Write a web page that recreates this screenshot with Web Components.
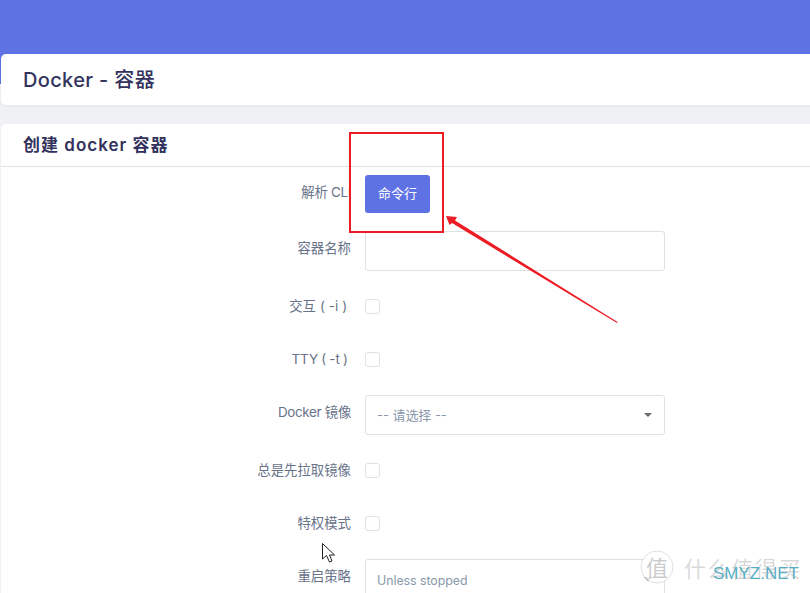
<!DOCTYPE html>
<html lang="zh">
<head>
<meta charset="utf-8">
<title>Docker - 容器</title>
<style>
    html, body {
        margin: 0;
        height: 100%;
        overflow: hidden;
        background: #f0f1f4;
        font-family: Inter, "Noto Sans CJK SC", sans-serif;
    }
</style>
</head>
<body>
<docker-page>
    <page-title slot="header">Docker - 容器</page-title>
    <form-card title="创建 docker 容器">
        <form-row label="解析 CLI" style="--label-track:-0.3px"><ui-button>命令行</ui-button></form-row>
        <form-row label="容器名称"><ui-input></ui-input></form-row>
        <form-row label="交互 ( -i )&nbsp;" check style="--label-word:0.2px"><ui-check></ui-check></form-row>
        <form-row label="TTY ( -t )&nbsp;" check style="--label-word:-0.6px"><ui-check></ui-check></form-row>
        <form-row label="Docker 镜像" style="--label-track:-0.3px"><ui-select>-- 请选择 --</ui-select></form-row>
        <form-row label="总是先拉取镜像" check><ui-check></ui-check></form-row>
        <form-row label="特权模式" check><ui-check></ui-check></form-row>
        <form-row label="重启策略"><ui-select latin><span style="font-size:12.4px">Unless stopped</span></ui-select></form-row>
    </form-card>
</docker-page>
<shot-marks></shot-marks>
<script>
"use strict";
class DockerPage extends HTMLElement {
    constructor() {
        super();
        this.attachShadow({ mode: "open" });
        this.shadowRoot.innerHTML = `
            <style>
                :host {
                    display: block;
                    height: 593px;
                    overflow: hidden;
                    background: linear-gradient(#5e72e4 84px, #f0f1f4 84px);
                }
                #wrap {
                    display: flex;
                    flex-direction: column;
                    gap: 19px;
                    padding: 54px 0 0 1px;
                    width: 830px;
                }
            </style>
            <div id="wrap">
                <slot name="header"></slot>
                <slot></slot>
            </div>
        `;
    }
}
customElements.define("docker-page", DockerPage);

class PageTitle extends HTMLElement {
    constructor() {
        super();
        this.attachShadow({ mode: "open" });
        this.shadowRoot.innerHTML = `
            <style>
                :host {
                    display: flex;
                    align-items: center;
                    box-sizing: border-box;
                    height: 51px;
                    padding: 0 0 3px 22px;
                    background: #fff;
                    border-radius: 5px;
                    box-shadow: 0 1px 3px rgba(50,50,93,0.06);
                    color: #32325d;
                    font-size: 20px;
                    font-weight: 500;
                    letter-spacing: 0.35px;
                }
            </style>
            <slot></slot>
        `;
    }
}
customElements.define("page-title", PageTitle);

class FormCard extends HTMLElement {
    constructor() {
        super();
        this.attachShadow({ mode: "open" });
        this.shadowRoot.innerHTML = `
            <style>
                :host {
                    display: block;
                    background: #fff;
                    border-radius: 5px 5px 0 0;
                }
                header {
                    display: flex;
                    align-items: center;
                    box-sizing: border-box;
                    height: 43px;
                    padding: 0 0 3px 22px;
                    border-bottom: 1px solid #e0e1e4;
                    color: #32325d;
                    font-size: 17px;
                    font-weight: 600;
                    letter-spacing: 1px;
                }
                #main {
                    display: flex;
                    flex-direction: column;
                    gap: 18px;
                    padding-top: 8px;
                }
            </style>
            <header></header>
            <div id="main"><slot></slot></div>
        `;
        this.shadowRoot.querySelector("header").textContent = this.getAttribute("title");
        this.removeAttribute("title");
    }
}
customElements.define("form-card", FormCard);

class FormRow extends HTMLElement {
    constructor() {
        super();
        this.attachShadow({ mode: "open" });
        this.shadowRoot.innerHTML = `
            <style>
                :host {
                    display: grid;
                    grid-template-columns: 350px 300px;
                    column-gap: 14px;
                }
                :host([check]) {
                    height: 35px;
                }
                label {
                    text-align: right;
                    padding-top: 7px;
                    color: #687289;
                    font-size: 13.4px;
                    line-height: 20px;
                    letter-spacing: var(--label-track, 0);
                    word-spacing: var(--label-word, 0);
                }
            </style>
            <label></label>
            <div><slot></slot></div>
        `;
        this.shadowRoot.querySelector("label").textContent = this.getAttribute("label");
    }
}
customElements.define("form-row", FormRow);

class UiButton extends HTMLElement {
    constructor() {
        super();
        this.attachShadow({ mode: "open" });
        this.shadowRoot.innerHTML = `
            <style>
                :host {
                    display: flex;
                    align-items: center;
                    justify-content: center;
                    box-sizing: border-box;
                    width: 65px;
                    height: 38px;
                    padding-bottom: 3px;
                    background: #5e72e4;
                    border-radius: 3px;
                    color: #fff;
                    font-size: 13px;
                }
            </style>
            <slot></slot>
        `;
    }
}
customElements.define("ui-button", UiButton);

class UiInput extends HTMLElement {
    constructor() {
        super();
        this.attachShadow({ mode: "open" });
        this.shadowRoot.innerHTML = `
            <style>
                :host {
                    display: block;
                    box-sizing: border-box;
                    height: 40px;
                    border: 1px solid #dee2e6;
                    border-radius: 3px;
                    background: #fff;
                }
            </style>
        `;
    }
}
customElements.define("ui-input", UiInput);

class UiCheck extends HTMLElement {
    constructor() {
        super();
        this.attachShadow({ mode: "open" });
        this.shadowRoot.innerHTML = `
            <style>
                :host {
                    display: block;
                    box-sizing: border-box;
                    width: 15px;
                    height: 15px;
                    margin-top: 10px;
                    border: 1px solid #dee2e6;
                    border-radius: 3px;
                    background: #fff;
                }
            </style>
        `;
    }
}
customElements.define("ui-check", UiCheck);

class UiSelect extends HTMLElement {
    constructor() {
        super();
        this.attachShadow({ mode: "open" });
        this.shadowRoot.innerHTML = `
            <style>
                :host {
                    display: flex;
                    align-items: center;
                    justify-content: space-between;
                    box-sizing: border-box;
                    height: 40px;
                    padding: 0 12px 0 11px;
                    border: 1px solid #dee2e6;
                    border-radius: 3px;
                    background: #fff;
                    color: #8898aa;
                    font-size: 13px;
                }
                #text {
                    margin-top: -2px;
                    letter-spacing: -0.05px;
                }
                :host([latin]) #text {
                    margin-top: 1px;
                }
                #caret {
                    width: 0;
                    height: 0;
                    border: 4px solid transparent;
                    border-top-color: #6a6a6a;
                    border-bottom: 0;
                }
            </style>
            <span id="text"><slot></slot></span>
            <span id="caret"></span>
        `;
    }
}
customElements.define("ui-select", UiSelect);

// screenshot annotations: red box and arrow, mouse pointer, watermark
class ShotMarks extends HTMLElement {
    constructor() {
        super();
        this.attachShadow({ mode: "open" });
        this.shadowRoot.innerHTML = `
            <style>
                :host {
                    position: absolute;
                    top: 0;
                    left: 0;
                    width: 810px;
                    height: 593px;
                    pointer-events: none;
                }
                svg {
                    position: absolute;
                    top: 0;
                    left: 0;
                }
                .faint {
                    position: absolute;
                    left: 684px;
                    top: 551px;
                    font: 22px "Noto Sans CJK SC", sans-serif;
                    letter-spacing: 1.6px;
                    color: rgba(120,120,120,0.28);
                    white-space: nowrap;
                }
                .zhi {
                    position: absolute;
                    left: 646px;
                    top: 550px;
                    font: 22px "Noto Sans CJK SC", sans-serif;
                    color: rgba(120,120,120,0.38);
                }
                .site {
                    position: absolute;
                    left: 713px;
                    top: 564px;
                    font: 17px "Liberation Sans", sans-serif;
                    color: #5aaec4;
                    white-space: nowrap;
                }
            </style>
            <svg width="810" height="593" viewBox="0 0 810 593">
                <rect x="350" y="133" width="93" height="99" fill="none" stroke="#ed1c24" stroke-width="2"/>
                <path d="M446 216 L457 217 L455 220.5 L617.5 322 L617 323 L452 223 L449.5 225 Z" fill="#ed1c24"/>
                <circle cx="657" cy="567" r="16" fill="#fff" fill-opacity="0.85" stroke="#999" stroke-opacity="0.3"/>
                <path d="M322.5 543.5 V559 L326.5 555.5 L329.5 562 L332 561 L329.5 555 L334.5 555 Z" fill="#fff" stroke="#222" stroke-width="1"/>
            </svg>
            <span class="zhi">值</span>
            <span class="faint">什么值得买</span>
            <span class="site">SMYZ.NET</span>
        `;
    }
}
customElements.define("shot-marks", ShotMarks);
</script>
</body>
</html>
